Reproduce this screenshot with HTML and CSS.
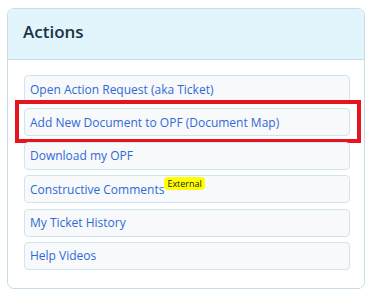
FILE: index.html
```html
<!DOCTYPE html>
<html>
<head>
<meta charset="utf-8">
<link rel="stylesheet" href="styles.css">
</head>
<body>
<div class="card">
  <div class="card-header">Actions</div>
  <div class="card-body">
    <a class="item">Open Action Request (aka Ticket)</a>
    <a class="item highlighted">Add New Document to OPF (Document Map)<span class="annot"></span></a>
    <a class="item">Download my OPF</a>
    <a class="item">Constructive Comments<span class="badge">External</span></a>
    <a class="item">My Ticket History</a>
    <a class="item">Help Videos</a>
  </div>
</div>
</body>
</html>
```
FILE: styles.css
```css
html, body {
  margin: 0;
  padding: 0;
  background: #ffffff;
}
body {
  padding: 8px 0 0 7px;
  font-family: "Open Sans", "Noto Sans", sans-serif;
}
.card {
  width: 356px;
  height: 279px;
  border: 1px solid #c6dde8;
  border-radius: 7px;
}
.card-header {
  background: #e3f5fc;
  border-bottom: 1px solid #c6dde8;
  border-radius: 7px 7px 0 0;
  box-sizing: border-box;
  height: 51px;
  padding: 11px 0 0 15px;
  font-size: 17px;
  font-weight: 600;
  color: #183347;
}
.card-body {
  display: flex;
  flex-direction: column;
  gap: 5.4px;
  padding: 15px 14px 0 16px;
}
.item {
  position: relative;
  display: flex;
  align-items: center;
  height: 28px;
  box-sizing: border-box;
  padding: 0 5px;
  border: 1px solid #cfe5f1;
  border-radius: 4px;
  background: #f7f9fb;
  color: #3069d6;
  font-size: 12px;
  text-decoration: none;
}
.badge {
  align-self: flex-start;
  margin-top: 1px;
  background: #ffff00;
  color: #222;
  font-size: 9px;
  line-height: 13px;
  padding: 0 3px;
  border-radius: 4px;
}
.annot {
  position: absolute;
  left: -10px;
  right: -12px;
  top: -9px;
  bottom: -8px;
  border: 4px solid #e5141f;
}
```
